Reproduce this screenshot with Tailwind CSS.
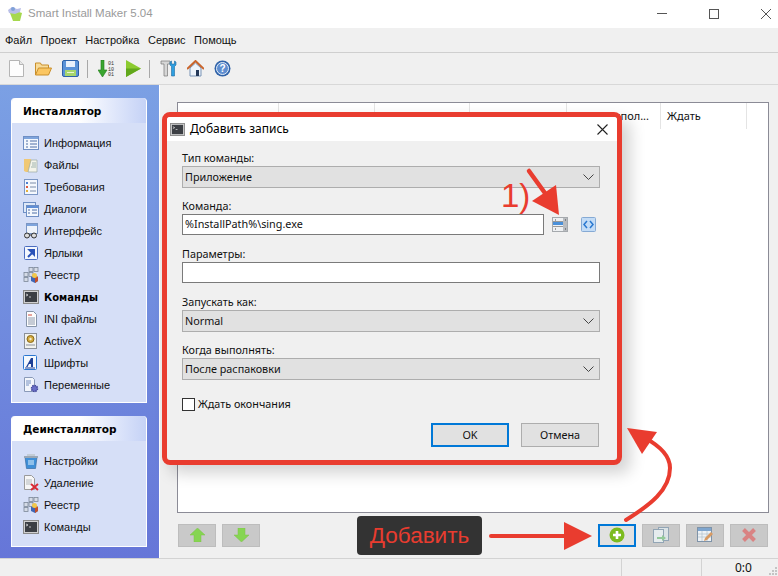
<!DOCTYPE html>
<html lang="ru">
<head>
  <meta charset="UTF-8">
  <title>Smart Install Maker 5.04</title>
  <script src="https://cdn.jsdelivr.net/npm/@tailwindcss/browser@4"></script>
</head>
<body class="bg-[#f0f0f0] font-['Noto_Sans','Liberation_Sans',sans-serif] text-[11px] text-[#111] overflow-hidden">
  <svg class="hidden">
    <symbol id="term" viewBox="0 0 16 14"><rect x=".5" y=".5" width="15" height="13" fill="#d0d0d0" stroke="#8a8a8a"/><rect x="2" y="2" width="12" height="10" fill="#3c3f44"/><path d="M3 4l2 1-2 1M6 7h2" stroke="#ddd" fill="none" stroke-width=".8"/></symbol>
    <symbol id="reg" viewBox="0 0 16 16"><g fill="#d5dbe6" stroke="#7c8798" stroke-width=".8"><rect x="6" y=".5" width="4" height="4"/><rect x="11" y=".5" width="4" height="4"/><rect x="1" y="5.5" width="4" height="4"/><rect x="6" y="5.5" width="4" height="4"/><rect x="1" y="10.5" width="4" height="4"/></g><path d="M8 10l4-2 3 2v4l-3 2-4-2z" fill="#3f66b5"/><path d="M12 8l3 2v4l-3 2z" fill="#c4502a"/><circle cx="11.500" cy="8.500" r="2.500" fill="#f2c84b"/></symbol>
  </svg>

  <div class="relative flex flex-col w-[778px] h-[576px] overflow-hidden">
    <!-- заголовок -->
    <div class="flex items-center h-[28px] bg-white shrink-0">
      <svg class="ml-[7px] w-[16px] h-[16px]" viewBox="0 0 16 16"><path d="M3 7l6-2 6 2-2 8H6z" fill="#a6d84e"/><path d="M1 4l4-3 5 2 4-1-1 4-5 2-6-1z" fill="#b9bfe8"/><circle cx="6" cy="3" r="2" fill="#7fa1d8"/></svg>
      <span class="ml-[5px] -mt-[1px] font-['Liberation_Sans',sans-serif] text-[11.500px] text-[#9a9a9a]">Smart Install Maker 5.04</span>
      <div class="ml-auto flex items-center gap-[42px] pr-[7px] -mt-[1px]">
        <div class="w-[10px] h-px bg-[#555]"></div>
        <div class="w-[10px] h-[10px] border border-[#555]"></div>
        <svg class="w-[10px] h-[10px]" viewBox="0 0 10 10"><path d="M0 0l10 10M10 0L0 10" stroke="#555"/></svg>
      </div>
    </div>
    <!-- меню -->
    <div class="flex items-center gap-[8.500px] h-[25px] pl-[5px] bg-[#f0f0f0] border-b border-[#cfcfcf] shrink-0 font-['Liberation_Sans',sans-serif]">
      <span>Файл</span><span>Проект</span><span>Настройка</span><span>Сервис</span><span>Помощь</span>
    </div>
    <!-- панель инструментов -->
    <div class="flex items-center h-[32px] pl-[9px] bg-[#f0f0f0] border-b border-[#d8d8d8] shrink-0">
      <svg class="w-[15px] h-[17px]" viewBox="0 0 15 17"><path d="M.5.5h10l4 4v12H.5z" fill="#fdfdfd" stroke="#b5b5b5"/><path d="M10.500.5v4h4" fill="#e8e8e8" stroke="#b5b5b5"/></svg>
      <svg class="ml-[11px] w-[17px] h-[15px]" viewBox="0 0 17 15"><path d="M.5 14V2h5l1 2h7v3" fill="#f8dc9a" stroke="#c98f2b"/><path d="M.5 14l3-7h13l-3 7z" fill="#fbc661" stroke="#c98f2b"/></svg>
      <svg class="ml-[10px] w-[17px] h-[17px]" viewBox="0 0 17 17"><rect x=".5" y=".5" width="16" height="16" rx="1.500" fill="#5b93d8" stroke="#2e62a8"/><rect x="4" y="1" width="9" height="6" fill="#e9f1fb"/><rect x="3" y="10" width="11" height="6" fill="#a6d66d"/><rect x="5" y="12" width="7" height="1" fill="#e8f6d6"/></svg>
      <div class="ml-[8px] w-px h-[18px] bg-[#a8a8a8]"></div>
      <svg class="ml-[10px] w-[17px] h-[17px]" viewBox="0 0 17 17"><path d="M3 0h3v10h3l-4.500 7L0 10h3z" fill="#3aa62f" stroke="#237a1b" stroke-width=".6"/><text x="10" y="5" font-size="5" font-family="Liberation Mono" fill="#333">01</text><text x="10" y="10.500" font-size="5" font-family="Liberation Mono" fill="#333">10</text><text x="10" y="16" font-size="5" font-family="Liberation Mono" fill="#333">01</text></svg>
      <svg class="ml-[11px] w-[15px] h-[17px]" viewBox="0 0 15 17"><path d="M0 0l15 8.500L0 17z" fill="#8ccb2f"/><path d="M0 8.500h15L0 17z" fill="#62a81c"/></svg>
      <div class="ml-[8px] w-px h-[18px] bg-[#a8a8a8]"></div>
      <svg class="ml-[10px] w-[17px] h-[17px]" viewBox="0 0 17 17"><path d="M1 1h9v3H7.500v12h-3.500V4H1z" fill="#d6d6d6" stroke="#777" stroke-width=".7"/><path d="M11.500 1v3h3V1l1.500 1v3l-1.500 1.500V16h-3V6.500L10 5V2z" fill="#2f9fe0" stroke="#1d6aa0" stroke-width=".6"/></svg>
      <svg class="ml-[10px] w-[17px] h-[17px]" viewBox="0 0 17 17"><path d="M3 8v8h11V8l-5.500-5z" fill="#eef4fb" stroke="#7893b5"/><path d="M0 9l8.500-8L17 9" fill="none" stroke="#c9642b" stroke-width="2"/><rect x="9" y="10" width="3" height="6" fill="#263a5a"/></svg>
      <svg class="ml-[10px] w-[17px] h-[17px]" viewBox="0 0 17 17"><circle cx="8.500" cy="8.500" r="8" fill="#2f62a8"/><circle cx="8.500" cy="8.500" r="6" fill="#5f8ed0" stroke="#e6eef8"/><text x="8.500" y="12" text-anchor="middle" font-size="10" font-weight="700" font-family="Liberation Sans" fill="#fff">?</text></svg>
    </div>

    <div class="flex flex-1 min-h-0">
      <!-- боковая панель -->
      <aside class="w-[159px] shrink-0 bg-gradient-to-b from-[#7ba0e4] to-[#6676d8] px-[11px] pt-[13px] flex flex-col gap-[13px] h-[473px] font-['Liberation_Sans',sans-serif]">
        <section class="w-[136px] h-[305px] border border-white border-t-0 rounded-t-[4px] bg-[#d6dff7]">
          <h2 class="flex items-center h-[25px] pt-[2px] pl-[11px] rounded-t-[4px] bg-gradient-to-r from-white via-white to-[#c5d2f6] font-['DejaVu_Sans',sans-serif] font-bold text-[10.500px] text-black">Инсталлятор</h2>
          <ul class="pt-[9px] pl-[11px]">
            <li class="flex items-center gap-[5px] h-[22px]"><svg class="w-[16px] h-[16px]" viewBox="0 0 16 16"><rect x=".5" y="1.500" width="15" height="13" fill="#f3f7fd" stroke="#6f8fc4"/><rect x="1" y="2" width="14" height="2" fill="#7ea4dc"/><path d="M3 6h2M3 9h2M3 12h2M7 6h7M7 9h7M7 12h7" stroke="#4f6ea6"/></svg>Информация</li>
            <li class="flex items-center gap-[5px] h-[22px]"><svg class="w-[16px] h-[16px]" viewBox="0 0 16 16"><path d="M1 2h7v13H3l-2-1z" fill="#f0c875"/><path d="M8 3h6v12H5z" fill="#f4f4ea" stroke="#9aa7a0" stroke-width=".7"/><path d="M9 6h4M9 8h4M8 10h5" stroke="#7d9a9a" stroke-width=".7"/></svg>Файлы</li>
            <li class="flex items-center gap-[5px] h-[22px]"><svg class="w-[16px] h-[16px]" viewBox="0 0 16 16"><rect x="1.500" y=".5" width="13" height="15" fill="#f5f8fd" stroke="#7b96c4"/><rect x="3" y="3" width="2" height="2" fill="#4d7fd0"/><rect x="3" y="7" width="2" height="2" fill="#e05b40"/><rect x="3" y="11" width="2" height="2" fill="#e5b13a"/><path d="M7 4h6M7 8h6M7 12h6" stroke="#7a8ca8"/></svg>Требования</li>
            <li class="flex items-center gap-[5px] h-[22px]"><svg class="w-[16px] h-[16px]" viewBox="0 0 16 16"><rect x=".5" y="1.500" width="12" height="10" fill="#dfe9f8" stroke="#6f8fc4"/><rect x="3.500" y="4.500" width="12" height="11" fill="#f3f7fd" stroke="#6f8fc4"/><rect x="4" y="5" width="11" height="2" fill="#5f8ed6"/><path d="M5 9h2M5 12h2M9 9h5M9 12h5" stroke="#4f6ea6"/></svg>Диалоги</li>
            <li class="flex items-center gap-[5px] h-[22px]"><svg class="w-[16px] h-[16px]" viewBox="0 0 16 16"><rect x="3.500" y=".5" width="11" height="10" fill="#eef3fb" stroke="#7b96c4"/><rect x="4" y="1" width="10" height="2" fill="#7ea4dc"/><circle cx="4" cy="12.500" r="2.500" fill="#ddd" stroke="#333"/><circle cx="11" cy="12.500" r="2.500" fill="#ddd" stroke="#333"/><path d="M6 12h3" stroke="#333"/></svg>Интерфейс</li>
            <li class="flex items-center gap-[5px] h-[22px]"><svg class="w-[16px] h-[16px]" viewBox="0 0 16 16"><rect x="1.500" y="1.500" width="13" height="13" rx="1" fill="#f4f7fd" stroke="#4a6cc0"/><path d="M5 12l5-5M6.500 5H11v4.500z" stroke="#2a52b8" stroke-width="2" fill="#2a52b8"/></svg>Ярлыки</li>
            <li class="flex items-center gap-[5px] h-[22px]"><svg class="w-[16px] h-[16px]"><use href="#reg"/></svg>Реестр</li>
            <li class="flex items-center gap-[5px] h-[22px] font-['DejaVu_Sans',sans-serif] font-bold text-[10px] text-black"><svg class="w-[16px] h-[14px]"><use href="#term"/></svg>Команды</li>
            <li class="flex items-center gap-[5px] h-[22px]"><svg class="w-[16px] h-[16px]" viewBox="0 0 16 16"><path d="M3.500.5h7l3 3v12h-10z" fill="#fdfdfd" stroke="#8694a8"/><path d="M5 4h4" stroke="#d04a3a"/><path d="M5 7h7M5 9h7M5 11h7M5 13h7" stroke="#5d6f8a" stroke-width=".7"/></svg>INI файлы</li>
            <li class="flex items-center gap-[5px] h-[22px]"><svg class="w-[16px] h-[16px]" viewBox="0 0 16 16"><rect x="1.500" y=".5" width="12" height="15" fill="#f2f2ee" stroke="#8a8f98"/><circle cx="7.500" cy="6" r="3.500" fill="#d2a83c" stroke="#8a6a1a"/><circle cx="7.500" cy="6" r="1.200" fill="#f6edcc"/><path d="M3 12h9" stroke="#8a8f98"/></svg>ActiveX</li>
            <li class="flex items-center gap-[5px] h-[22px]"><svg class="w-[16px] h-[16px]" viewBox="0 0 16 16"><rect x=".5" y=".5" width="13" height="14" rx="1" fill="#f4f8fd" stroke="#2a76d0"/><path d="M3 12l5-9h2v9H8V9H6l-1.500 3z" fill="#1d3f96"/><path d="M2 13h10" stroke="#1d3f96"/></svg>Шрифты</li>
            <li class="flex items-center gap-[5px] h-[22px]"><svg class="w-[16px] h-[16px]" viewBox="0 0 16 16"><path d="M1.500.5h8l2 2v12h-10z" fill="#f2f5fb" stroke="#8a9ab8"/><path d="M3 4h5M3 6h5M3 8h3" stroke="#5576b5" stroke-width=".8"/><circle cx="11.500" cy="11.500" r="3" fill="#6a6fc8" stroke="#44489a" stroke-width="1.500" stroke-dasharray="1.500 .8"/></svg>Переменные</li>
          </ul>
        </section>
        <section class="w-[136px] h-[131px] border border-white border-t-0 rounded-t-[4px] bg-[#d6dff7]">
          <h2 class="flex items-center h-[25px] pt-[2px] pl-[11px] rounded-t-[4px] bg-gradient-to-r from-white via-white to-[#c5d2f6] font-['DejaVu_Sans',sans-serif] font-bold text-[10.500px] text-black">Деинсталлятор</h2>
          <ul class="pt-[9px] pl-[11px]">
            <li class="flex items-center gap-[5px] h-[22px]"><svg class="w-[16px] h-[16px]" viewBox="0 0 16 16"><path d="M2 4h12l-1.500 11.500h-9z" fill="#3f8fd8" stroke="#3a6da0" stroke-width=".7"/><path d="M1 3h14v2H1z" fill="#9aa7b5"/><path d="M4 1h8v2H4z" fill="#c3ccd6"/><rect x="5" y="7" width="6" height="5" fill="#8fc0ea"/></svg>Настройки</li>
            <li class="flex items-center gap-[5px] h-[22px]"><svg class="w-[16px] h-[16px]" viewBox="0 0 16 16"><path d="M1.500.5h7l3 3v11h-10z" fill="#f6f6f6" stroke="#9a9a9a"/><path d="M3 5h6M3 7h6M3 9h5" stroke="#9aa0a8" stroke-width=".7"/><path d="M8 9l7 6M15 9l-7 6" stroke="#d92b35" stroke-width="2"/></svg>Удаление</li>
            <li class="flex items-center gap-[5px] h-[22px]"><svg class="w-[16px] h-[16px]"><use href="#reg"/></svg>Реестр</li>
            <li class="flex items-center gap-[5px] h-[22px]"><svg class="w-[16px] h-[14px]"><use href="#term"/></svg>Команды</li>
          </ul>
        </section>
      </aside>

      <!-- основная часть -->
      <main class="flex-1 bg-[#f0f0f0] border-l border-white pl-[17px] pr-[9px] pt-[17px] flex flex-col">
        <div class="h-[411px] bg-white border border-[#8b8b96]">
          <div class="flex h-[26px] items-center">
            <div class="w-[101px] h-full border-r border-[#e4e4e4]"></div>
            <div class="w-[96px] h-full border-r border-[#e4e4e4]"></div>
            <div class="w-[95px] h-full border-r border-[#e4e4e4]"></div>
            <div class="w-[97px] h-full border-r border-[#e4e4e4]"></div>
            <div class="w-[94px] h-full border-r border-[#e4e4e4] flex items-center justify-end pr-[11px]">Когда выпол...</div>
            <div class="w-[86px] h-full border-r border-[#e4e4e4] flex items-center pl-[6px]">Ждать</div>
          </div>
        </div>
        <div class="flex items-center mt-[10px] h-[24px] pl-[1px] pr-0">
          <button class="flex items-center justify-center w-[38px] h-[23px] bg-[#c9c9c9] border border-[#bdbdbd]"><svg class="w-[15px] h-[14px]" viewBox="0 0 15 14"><path d="M7.500 0L15 7h-4v7H4V7H0z" fill="#86d552" stroke="#7cc04a" stroke-width=".5"/></svg></button>
          <button class="ml-[6px] flex items-center justify-center w-[38px] h-[23px] bg-[#c9c9c9] border border-[#bdbdbd]"><svg class="w-[15px] h-[14px]" viewBox="0 0 15 14"><path d="M7.500 14L15 7h-4V0H4v7H0z" fill="#86d552" stroke="#7cc04a" stroke-width=".5"/></svg></button>
          <button class="ml-auto flex items-center justify-center w-[38px] h-[23px] bg-[#e1e1e1] border-2 border-[#0078d7]"><svg class="w-[16px] h-[16px]" viewBox="0 0 16 16"><circle cx="8" cy="8" r="7.500" fill="#7dbb1f"/><path d="M8 4v8M4 8h8" stroke="#fff" stroke-width="2.600"/></svg></button>
          <button class="ml-[6px] flex items-center justify-center w-[38px] h-[23px] bg-[#c9c9c9] border border-[#bdbdbd]"><svg class="w-[16px] h-[16px]" viewBox="0 0 16 16"><rect x="5.500" y=".5" width="10" height="13" fill="#dbe3e6" stroke="#92a5b5"/><rect x=".5" y="2.500" width="10" height="13" fill="#e6ecee" stroke="#92a5b5"/><path d="M4 10h5V8l4 3-4 3v-2H4z" fill="#93c99a"/></svg></button>
          <button class="ml-[6px] flex items-center justify-center w-[38px] h-[23px] bg-[#c9c9c9] border border-[#bdbdbd]"><svg class="w-[16px] h-[16px]" viewBox="0 0 16 16"><rect x=".5" y=".5" width="14" height="14" fill="#eef2f6" stroke="#7f93a8"/><rect x="1" y="1" width="13" height="3" fill="#7fa6cf"/><path d="M1 7h13M1 10h13M5 4v10M10 4v10" stroke="#a9b8c6" stroke-width=".6"/><path d="M7 14l1-3 6-6 2 2-6 6z" fill="#d89a62"/></svg></button>
          <button class="ml-[6px] mr-[1px] flex items-center justify-center w-[38px] h-[23px] bg-[#c9c9c9] border border-[#bdbdbd]"><svg class="w-[16px] h-[16px]" viewBox="0 0 16 16"><path d="M2.500 2.500l11 11M13.500 2.500l-11 11" stroke="#d98383" stroke-width="4"/></svg></button>
        </div>
      </main>
    </div>

    <!-- строка состояния -->
    <footer class="relative flex h-[18px] border-t border-[#d3d3d3] bg-[#f0f0f0] shrink-0">
      <div class="w-[622px] border-r border-[#d3d3d3]"></div>
      <div class="w-[80px] border-r border-[#d3d3d3]"></div>
      <div class="pl-[33px] leading-[17px] text-[12px]">0:0</div>
      <svg class="absolute right-0 bottom-0 w-[10px] h-[10px]" viewBox="0 0 10 10"><path d="M7 1h2v2H7zM4 4h2v2H4zM7 4h2v2H7zM1 7h2v2H1zM4 7h2v2H4zM7 7h2v2H7z" fill="#c4c4c4"/></svg>
    </footer>

    <!-- диалог поверх окна -->
    <div class="absolute left-[162px] top-[112px] w-[460px] h-[353px] border-[5px] border-[#e93c2f] rounded-[8px] bg-[#f0f0f0] shadow-[8px_8px_16px_rgba(0,0,0,0.18)] overflow-hidden flex flex-col">
      <div class="flex items-center h-[24px] bg-white shrink-0">
        <svg class="ml-[3px] w-[15px] h-[13px]"><use href="#term"/></svg>
        <span class="ml-[5px] text-[12px] text-black">Добавить запись</span>
        <svg class="ml-auto mr-[9px] w-[11px] h-[11px]" viewBox="0 0 11 11"><path d="M.5.5l10 10M10.500.5l-10 10" stroke="#222" stroke-width="1.100"/></svg>
      </div>
      <form class="pl-[15px] pr-[17px] flex flex-col text-[10.800px]">
        <label class="h-[17px] mt-[8px] leading-[17px]">Тип команды:</label>
        <div class="flex items-center justify-between h-[22px] bg-[#e1e1e1] border border-[#adadad] pl-[2px] pr-[5px]">Приложение<svg class="w-[11px] h-[6px]" viewBox="0 0 11 6"><path d="M.5.5l5 5 5-5" fill="none" stroke="#444"/></svg></div>
        <label class="h-[17px] mt-[9px] leading-[17px]">Команда:</label>
        <div class="flex items-center">
          <div class="flex items-center w-[362px] h-[21px] bg-white border border-[#7a7a7a] pl-[2px]">%InstallPath%\sing.exe</div>
          <svg class="ml-[8px] w-[16px] h-[15px]" viewBox="0 0 16 15"><rect x=".5" y=".5" width="15" height="14" fill="#eef0f2" stroke="#a5a9ad"/><rect x="1" y="5" width="10" height="3" fill="#4a90d9"/><rect x="11" y="1" width="4" height="13" fill="#b9bcc0"/><path d="M1 9.500h10M1 4.500h10" stroke="#999"/><path d="M3 3h1M3 12h1M13 3h1M13 12h1" stroke="#444"/></svg>
          <svg class="ml-[13px] w-[15px] h-[15px]" viewBox="0 0 15 15"><rect x=".5" y=".5" width="14" height="14" rx="1" fill="#c3dcf6" stroke="#86aad4"/><path d="M6 4L3 7.500 6 11M9 4l3 3.500L9 11" fill="none" stroke="#2a78d0" stroke-width="1.500"/></svg>
        </div>
        <label class="h-[17px] mt-[10px] leading-[17px]">Параметры:</label>
        <div class="w-full h-[21px] bg-white border border-[#7a7a7a]"></div>
        <label class="h-[17px] mt-[10px] leading-[17px]">Запускать как:</label>
        <div class="flex items-center justify-between h-[22px] bg-[#e1e1e1] border border-[#adadad] pl-[2px] pr-[5px]">Normal<svg class="w-[11px] h-[6px]" viewBox="0 0 11 6"><path d="M.5.5l5 5 5-5" fill="none" stroke="#444"/></svg></div>
        <label class="h-[17px] mt-[9px] leading-[17px]">Когда выполнять:</label>
        <div class="flex items-center justify-between h-[22px] bg-[#e1e1e1] border border-[#adadad] pl-[2px] pr-[5px]">После распаковки<svg class="w-[11px] h-[6px]" viewBox="0 0 11 6"><path d="M.5.5l5 5 5-5" fill="none" stroke="#444"/></svg></div>
        <div class="flex items-center mt-[17px] h-[14px]"><div class="w-[13px] h-[13px] bg-white border border-[#333]"></div><span class="ml-[3px]">Ждать окончания</span></div>
        <div class="flex justify-end gap-[12px] mt-[12px] mr-[1px]">
          <button type="button" class="w-[78px] h-[24px] bg-[#e1e1e1] border-2 border-[#0078d7]">OK</button>
          <button type="button" class="w-[78px] h-[24px] bg-[#e1e1e1] border border-[#adadad]">Отмена</button>
        </div>
      </form>
    </div>

    <!-- пометки поверх скриншота -->
    <div class="absolute left-[357px] top-[516px] w-[125px] h-[39px] rounded-[4px] bg-[#333] text-[#e93c2f] font-['Liberation_Sans',sans-serif] text-[22.500px] flex items-center justify-center">Добавить</div>
    <div class="absolute left-[501px] top-[178px] font-['Liberation_Sans',sans-serif] text-[33px] leading-[36px] text-[#e93c2f]">1)</div>
    <svg class="absolute left-0 top-0 w-[778px] h-[576px] pointer-events-none" viewBox="0 0 778 576" fill="none">
      <path d="M529 171l21 29" stroke="#e93c2f" stroke-width="4.500" stroke-linecap="round"/>
      <path d="M532 201L556 185 559 215z" fill="#e93c2f"/>
      <path d="M491 536h85" stroke="#e93c2f" stroke-width="4" stroke-linecap="round"/>
      <path d="M564 522l28 14-28 14z" fill="#e93c2f"/>
      <path d="M626 520C650 505 670 490 670 468 670 455 658 445 645 438" stroke="#e93c2f" stroke-width="4" stroke-linecap="round"/>
      <path d="M627 428L657 432 642 454z" fill="#e93c2f"/>
    </svg>
  </div>
</body>
</html>
